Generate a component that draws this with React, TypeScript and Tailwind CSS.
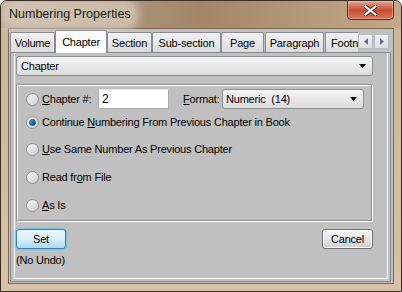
import React from "react";

const font = {
  fontFamily: '"Segoe UI", "Liberation Sans", Arial, sans-serif',
  letterSpacing: "-0.2px",
};

function Radio({ checked }: { checked?: boolean }) {
  return (
    <div className="w-[13px] h-[13px] rounded-full border border-[#8e8f8f] bg-gradient-to-br from-[#f6f6f6] to-[#cfcfcf] flex items-center justify-center shrink-0">
      {checked && (
        <div className="w-[7px] h-[7px] rounded-full bg-gradient-to-br from-[#7fc4f0] via-[#1d6fae] to-[#0b3f6e] border border-[#0d4a7e]" />
      )}
    </div>
  );
}

function Arrow() {
  return (
    <svg width="8" height="5" viewBox="0 0 8 5">
      <path d="M0 0 H7 L3.5 4 Z" fill="#000" />
    </svg>
  );
}

function Tab({ label, w, selected }: { label: string; w: number; selected?: boolean }) {
  if (selected)
    return (
      <div
        className="h-[23px] -mb-[1px] -mx-[2px] relative z-10 border border-b-0 border-[#898c95] bg-[#fbfbfb] flex items-start justify-center pt-[3px] rounded-t-[2px] whitespace-nowrap"
        style={{ width: w }}
      >
        {label}
      </div>
    );
  return (
    <div
      className="h-[20px] border border-b-0 border-[#898c95] bg-gradient-to-b from-[#f2f2f2] to-[#dcdcdc] flex items-center justify-center overflow-hidden whitespace-nowrap rounded-t-[2px] pt-[1px]"
      style={{ width: w }}
    >
      {label}
    </div>
  );
}

export default function App() {
  return (
    <div
      className="w-[402px] h-[292px] flex flex-col text-[11px] text-black rounded-t-[7px] border border-[#3b2d22] bg-gradient-to-b from-[#c9b497] to-[#d8c3a6] overflow-hidden"
      style={font}
    >
      {/* TITLE BAR */}
      <div className="h-[27px] relative flex items-center pl-[7px] bg-gradient-to-r from-[#b7aa98] via-[#a38668] to-[#c3a98a]">
        <span className="text-[12.5px] tracking-normal text-[#1b1b1b] px-[1px] rounded-[6px] bg-[#d8cdbc]/70 shadow-[0_0_8px_6px_rgba(221,211,196,0.7)]">
          Numbering Properties
        </span>
        <div className="absolute right-[7px] -top-[1px] w-[47px] h-[20px] rounded-b-[4px] border border-[#5c2a1f] bg-gradient-to-b from-[#e6a592] via-[#c84c33] to-[#d4765b] flex items-center justify-center shadow-[inset_0_0_0_1px_rgba(255,200,180,0.5)]">
          <svg width="13" height="11" viewBox="0 0 13 11">
            <path d="M1.5 1.5 L11.5 9.5 M11.5 1.5 L1.5 9.5" stroke="#4a1a12" strokeWidth="4" strokeLinecap="square" />
            <path d="M1.5 1.5 L11.5 9.5 M11.5 1.5 L1.5 9.5" stroke="#fff" strokeWidth="2.2" strokeLinecap="square" />
          </svg>
        </div>
      </div>

      {/* CLIENT */}
      <div className="flex-1 mx-[7px] mb-[7px] bg-[#c0c0c0] border border-[#7a6856] flex flex-col pt-[1px] pl-[1px] pr-[2px] pb-[1px]">
        {/* TABS */}
        <div className="h-[22px] flex items-end relative">
          <Tab label="Volume" w={45} />
          <div className="w-[2px]" />
          <Tab label="Chapter" w={52} selected />
          <div className="w-[2px]" />
          <Tab label="Section" w={45} />
          <Tab label="Sub-section" w={69} />
          <Tab label="Page" w={43} />
          <div className="w-[1px]" />
          <Tab label="Paragraph" w={59} />
          <div className="w-[1px]" />
          <div className="h-[20px] w-[33px] border border-b-0 border-r-0 border-[#898c95] bg-gradient-to-b from-[#f2f2f2] to-[#dcdcdc] flex items-center pl-[5px] pt-[1px] overflow-hidden whitespace-nowrap">
            Footn
          </div>
          <div className="h-[20px] flex items-center gap-[1px] pb-[2px]">
            <div className="w-[15px] h-[15px] border border-[#b9bcc4] bg-gradient-to-b from-[#f3f3f3] to-[#dedede] flex items-center justify-center">
              <svg width="4" height="7" viewBox="0 0 4 7"><path d="M4 0 V7 L0 3.5 Z" fill="#5d6f9e" /></svg>
            </div>
            <div className="w-[15px] h-[15px] border border-[#b9bcc4] bg-gradient-to-b from-[#f3f3f3] to-[#dedede] flex items-center justify-center">
              <svg width="4" height="7" viewBox="0 0 4 7"><path d="M0 0 V7 L4 3.5 Z" fill="#5d6f9e" /></svg>
            </div>
          </div>
        </div>

        {/* PANEL */}
        <div className="flex-1 border border-[#898c95] bg-[#c0c0c0] flex pl-[3px] pr-[2px] pb-[2px]">
          <div className="flex-1 border-l border-r border-b border-white flex flex-col pl-[1px] pr-[14px] pt-[3px]">
            {/* TOP DROPDOWN */}
            <div className="h-[20px] rounded-[3px] border border-[#8e8f8f] bg-gradient-to-b from-[#f4f4f4] to-[#dcdcdc] flex items-center justify-between pl-[4px] pr-[5px]">
              <span>Chapter</span>
              <Arrow />
            </div>

            {/* GROUP */}
            <div className="mt-[8px] h-[137px] border border-[#8f8f8f] shadow-[inset_1px_1px_0_#fff,1px_1px_0_#fff] flex flex-col pl-[9px] pt-[4px] mr-[1px]">
              <div className="h-[20px] flex items-center whitespace-nowrap">
                <Radio />
                <span className="ml-[3px] w-[56px]">
                  <span className="underline">C</span>hapter #:
                </span>
                <div className="w-[71px] h-[20px] bg-white border border-[#abadb3] border-t-[#e2e3ea] flex items-center pl-[3px] text-[12px]">
                  2
                </div>
                <span className="ml-[14px] w-[39px]">
                  <span className="underline">F</span>ormat:
                </span>
                <div className="w-[142px] h-[20px] rounded-[3px] border border-[#8e8f8f] bg-gradient-to-b from-[#f4f4f4] to-[#dcdcdc] flex items-center justify-between pl-[3px] pr-[5px]">
                  <span className="whitespace-pre">Numeric  (14)</span>
                  <Arrow />
                </div>
              </div>
              <div className="h-[27px] flex items-center">
                <Radio checked />
                <span className="ml-[3px]">
                  Continue <span className="underline">N</span>umbering From Previous Chapter in Book
                </span>
              </div>
              <div className="h-[27px] flex items-center">
                <Radio />
                <span className="ml-[3px]">
                  <span className="underline">U</span>se Same Number As Previous Chapter
                </span>
              </div>
              <div className="h-[28px] flex items-center">
                <Radio />
                <span className="ml-[3px]">
                  Read fr<span className="underline">o</span>m File
                </span>
              </div>
              <div className="h-[28px] flex items-center">
                <Radio />
                <span className="ml-[3px]">
                  <span className="underline">A</span>s Is
                </span>
              </div>
            </div>

            {/* BUTTONS */}
            <div className="mt-[8px] flex items-start justify-between">
              <div className="flex flex-col">
                <div className="w-[50px] h-[20px] rounded-[3px] border border-[#3c7fb1] bg-gradient-to-b from-[#eaf6fd] via-[#d9f0fc] to-[#a7d9f5] shadow-[0_0_2px_1px_#6cc4ef] flex items-center justify-center">
                  Set
                </div>
                <span className="mt-[3px]">(No Undo)</span>
              </div>
              <div className="w-[51px] h-[20px] rounded-[3px] border border-[#707070] bg-gradient-to-b from-[#f2f2f2] via-[#e6e6e6] to-[#cfcfcf] shadow-[inset_0_0_0_1px_#fcfcfc] flex items-center justify-center">
                Cancel
              </div>
            </div>
          </div>
        </div>
      </div>
    </div>
  );
}
